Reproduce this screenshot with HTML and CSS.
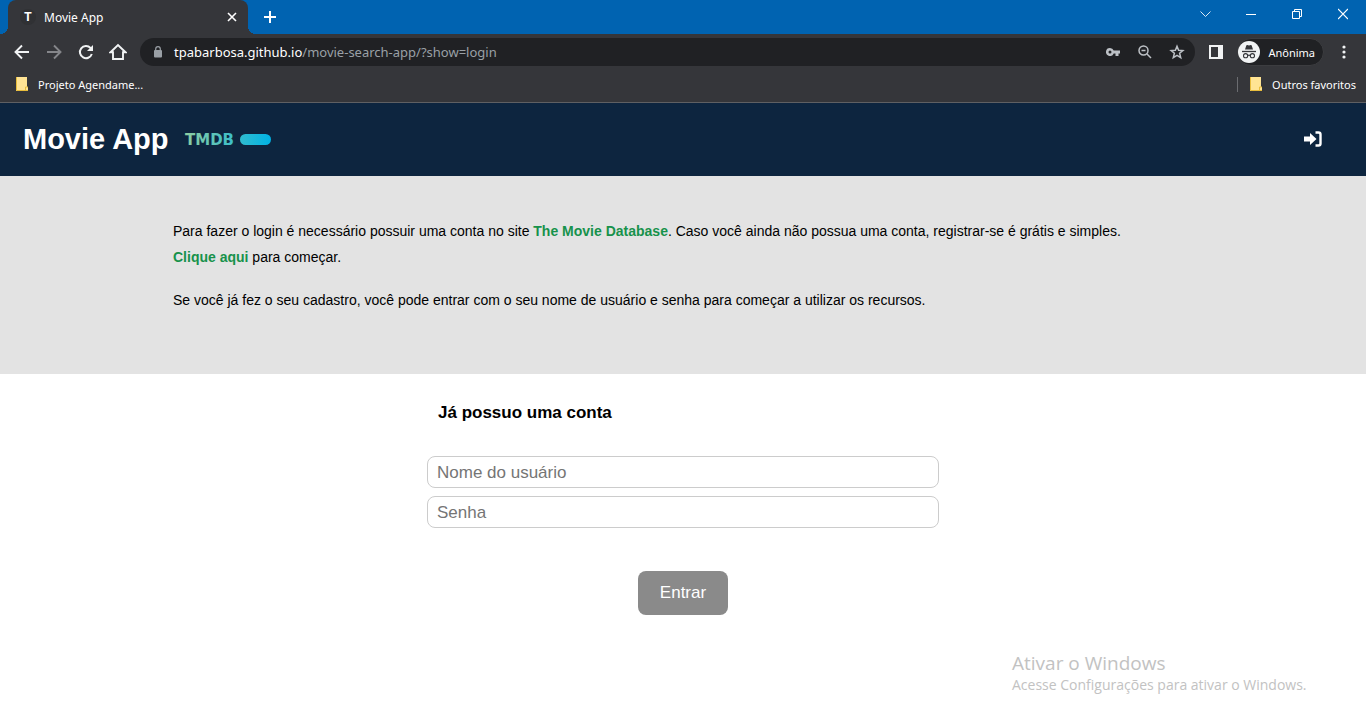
FILE: index.html
```html
<!DOCTYPE html>
<html lang="pt-BR">
<head>
<meta charset="utf-8">
<meta name="viewport" content="width=device-width, initial-scale=1">
<title>Movie App</title>
<link rel="stylesheet" href="styles.css">
</head>
<body>
<div class="browser">
  <div class="tabstrip">
    <div class="tab">
      <span class="favicon">T</span>
      <span class="tab-title">Movie App</span>
      <button class="icon-btn tab-close" aria-label="Fechar guia"><svg width="10" height="10" viewBox="0 0 10 10"><path d="M1 1l8 8M9 1l-8 8" stroke="#fff" stroke-width="1.6"/></svg></button>
    </div>
    <button class="icon-btn new-tab" aria-label="Nova guia"><svg width="12" height="12" viewBox="0 0 12 12"><path d="M6 0v12M0 6h12" stroke="#fff" stroke-width="2"/></svg></button>
    <div class="window-buttons">
      <button class="icon-btn win-btn" aria-label="Pesquisar guias"><svg width="11" height="12" viewBox="0 0 11 12"><path d="M.5 3.5l5 5 5-5" stroke="#dbe8f5" fill="none"/></svg></button>
      <button class="icon-btn win-btn" aria-label="Minimizar"><svg width="10" height="12" viewBox="0 0 10 12"><path d="M0 6.500h10" stroke="#fff"/></svg></button>
      <button class="icon-btn win-btn" aria-label="Restaurar"><svg width="10" height="12" viewBox="0 0 10 12"><path d="M.5 3.500h7v7h-7zM2.500 3.500v-2h7v7h-2" stroke="#fff" fill="none"/></svg></button>
      <button class="icon-btn win-btn" aria-label="Fechar"><svg width="10" height="12" viewBox="0 0 10 12"><path d="M0 1l10 10M10 1L0 11" stroke="#fff" stroke-width="1.2"/></svg></button>
    </div>
  </div>

  <div class="toolbar">
    <button class="icon-btn nav-btn" aria-label="Voltar"><svg width="16" height="16" viewBox="0 0 16 16"><path d="M15 8H2M8 1.500L1.500 8 8 14.500" stroke="#f1f3f4" stroke-width="1.900" fill="none"/></svg></button>
    <button class="icon-btn nav-btn" aria-label="Avançar"><svg width="16" height="16" viewBox="0 0 16 16"><path d="M1 8h13M8 1.500L14.500 8 8 14.500" stroke="#85868a" stroke-width="1.900" fill="none"/></svg></button>
    <button class="icon-btn nav-btn" aria-label="Recarregar"><svg width="16" height="16" viewBox="0 0 16 16"><path d="M13.800 10A6.100 6.100 0 1 1 12.500 3.900L14 5.400" stroke="#f1f3f4" stroke-width="2" fill="none"/><path d="M15 1v6H9z" fill="#f1f3f4"/></svg></button>
    <button class="icon-btn nav-btn" aria-label="Página inicial"><svg width="18" height="18" viewBox="0 0 18 18"><path d="M1.500 9.200L9 2l7.500 7.200H14V16H4V9.200z" stroke="#f1f3f4" stroke-width="1.900" fill="none"/></svg></button>
    <div class="omnibox">
      <svg width="8" height="12" viewBox="0 0 8 12"><rect y="4" width="8" height="7.500" rx="1" fill="#9aa0a6"/><path d="M1.700 5V3a2.300 2.300 0 0 1 4.600 0v2" stroke="#9aa0a6" stroke-width="1.200" fill="none"/></svg>
      <span class="url"><span class="host">tpabarbosa.github.io</span>/movie-search-app/?show=login</span>
      <button class="icon-btn omni-btn" aria-label="Senhas"><svg width="14" height="8" viewBox="0 0 14 8"><path fill-rule="evenodd" d="M4 0A4 4 0 0 1 7.700 2.600H14V5.400H12.500V8H9.500V5.400H7.700A4 4 0 1 1 4 0zM4 2.500a1.500 1.500 0 1 0 0 3 1.500 1.500 0 0 0 0-3z" fill="#bdc1c6"/></svg></button>
      <button class="icon-btn omni-btn" aria-label="Zoom"><svg width="14" height="14" viewBox="0 0 14 14"><circle cx="5.500" cy="5.500" r="4.500" stroke="#bdc1c6" stroke-width="1.500" fill="none"/><path d="M3.500 5.500h4M9 9l4 4" stroke="#bdc1c6" stroke-width="1.500"/></svg></button>
      <button class="icon-btn omni-btn" aria-label="Adicionar aos favoritos"><svg width="16" height="16" viewBox="0 0 16 16"><path d="M8 2.200l1.600 4 4.300.300-3.300 2.800 1.100 4.300L8 11.300l-3.700 2.300 1.100-4.300L2.100 6.500l4.300-.300z" stroke="#bdc1c6" stroke-width="1.500" fill="none"/></svg></button>
    </div>
    <button class="icon-btn side-panel" aria-label="Painel lateral"><svg width="14" height="14" viewBox="0 0 14 14"><path fill-rule="evenodd" d="M0 0h14v14H0zM2 2v10h7V2z" fill="#f1f3f4"/></svg></button>
    <button class="profile">
      <svg width="22" height="22" viewBox="0 0 22 22"><circle cx="11" cy="11" r="11" fill="#f1f3f4"/><path d="M7 8.500l1.300-4q.300-.600 1-.400l1.700.400 1.700-.400q.700-.200 1 .400l1.300 4z" fill="#35363a"/><path d="M4 10.500h14" stroke="#35363a" stroke-width="1.300"/><g fill="none" stroke="#35363a" stroke-width="1.100"><circle cx="7.600" cy="14.700" r="2.100"/><circle cx="14.400" cy="14.700" r="2.100"/><path d="M9.700 14.500q1.300-.800 2.600 0"/></g></svg>
      <span>Anônima</span>
    </button>
    <button class="icon-btn menu-btn" aria-label="Menu"><svg width="4" height="14" viewBox="0 0 4 14"><g fill="#f1f3f4"><circle cx="2" cy="2" r="1.600"/><circle cx="2" cy="7" r="1.600"/><circle cx="2" cy="12" r="1.600"/></g></svg></button>
  </div>

  <div class="bookmarks">
    <a class="bookmark" href="#"><svg width="12" height="14" viewBox="0 0 12 14"><path d="M0 0h11v10h1v4H0z" fill="#ffe494"/><path d="M.5 0v13.500H12M9.500 13v-3H12" stroke="#e8bd3c" fill="none"/></svg>Projeto Agendame...</a>
    <a class="bookmark others" href="#"><svg width="12" height="14" viewBox="0 0 12 14"><path d="M0 0h11v10h1v4H0z" fill="#ffe494"/><path d="M.5 0v13.500H12M9.500 13v-3H12" stroke="#e8bd3c" fill="none"/></svg>Outros favoritos</a>
  </div>
</div>

<header class="site-header">
  <h1 class="brand">Movie App</h1>
  <a class="tmdb" href="#">
    <svg width="88" height="24" viewBox="0 0 88 24" role="img" aria-label="TMDB">
      <defs><linearGradient id="tmdb-fill" gradientUnits="userSpaceOnUse" x1="0" y1="0" x2="87" y2="0"><stop offset="0" stop-color="#90cea1"/><stop offset=".56" stop-color="#3cbec9"/><stop offset="1" stop-color="#00b3e5"/></linearGradient></defs>
      <text class="tmdb-text" x="1" y="18" fill="url(#tmdb-fill)">TMDB</text>
      <rect x="56" y="7" width="31" height="11" rx="5.500" fill="url(#tmdb-fill)"/>
    </svg>
  </a>
  <button class="icon-btn sign-in" aria-label="Entrar na conta"><svg width="18" height="16" viewBox="0 0 18 16"><path d="M0 5.500h6V2l6.500 6L6 14v-3.500H0z" fill="#fff"/><path d="M11.500 1.500h3q2 0 2 2v9q0 2-2 2h-3" stroke="#fff" stroke-width="2.400" fill="none"/></svg></button>
</header>

<section class="intro">
  <div class="intro-text">
    <p>Para fazer o login é necessário possuir uma conta no site <a href="#">The Movie Database</a>. Caso você ainda não possua uma conta, registrar-se é grátis e simples. <a href="#">Clique aqui</a> para começar.</p>
    <p>Se você já fez o seu cadastro, você pode entrar com o seu nome de usuário e senha para começar a utilizar os recursos.</p>
  </div>
</section>

<main class="login">
  <form class="login-form">
    <h2>Já possuo uma conta</h2>
    <input type="text" placeholder="Nome do usuário" aria-label="Nome do usuário">
    <input type="password" placeholder="Senha" aria-label="Senha">
    <button class="submit" type="button">Entrar</button>
  </form>
</main>

<aside class="activation">
  <p class="activation-title">Ativar o Windows</p>
  <p>Acesse Configurações para ativar o Windows.</p>
</aside>
</body>
</html>
```
FILE: styles.css
```css
* {
  box-sizing: border-box;
}

body {
  margin: 0;
  background: #fff;
  color: #000;
  font-family: "Liberation Sans", Arial, sans-serif;
}

h1, h2, p {
  margin: 0;
}

svg {
  display: block;
  flex: none;
}

.icon-btn {
  display: flex;
  align-items: center;
  justify-content: center;
  padding: 0;
  border: 0;
  background: none;
}

/* Browser window */
.browser {
  background: #35363a;
  border-bottom: 1px solid #5f6063;
  color: #fff;
  font-family: "Noto Sans", "Open Sans", sans-serif;
  font-size: 12px;
}

.tabstrip {
  display: flex;
  height: 34px;
  padding-left: 8px;
  background: #0063b1;
}

.tab {
  position: relative;
  display: flex;
  align-items: center;
  gap: 8px;
  width: 240px;
  padding: 0 11px 0 12px;
  border-radius: 8px 8px 0 0;
  background: #35363a;
}

.tab::before,
.tab::after {
  content: "";
  position: absolute;
  bottom: 0;
  width: 8px;
  height: 8px;
}

.tab::before {
  left: -8px;
  background: radial-gradient(circle at 0 0, #0063b1 8px, #35363a 8px);
}

.tab::after {
  right: -8px;
  background: radial-gradient(circle at 100% 0, #0063b1 8px, #35363a 8px);
}

.favicon {
  width: 16px;
  border-radius: 8px;
  background: #303134;
  font-family: "Liberation Sans", Arial, sans-serif;
  font-weight: bold;
  line-height: 16px;
  text-align: center;
}

.tab-title {
  flex: 1;
}

.new-tab {
  width: 44px;
}

.window-buttons {
  display: flex;
  height: 28px;
  margin-left: auto;
}

.win-btn {
  width: 46px;
}

.toolbar {
  display: flex;
  align-items: center;
  height: 36px;
  padding: 0 2px 0 6px;
}

.nav-btn {
  width: 32px;
  height: 32px;
}

.omnibox {
  display: flex;
  flex: 1;
  align-items: center;
  height: 28px;
  margin-left: 6px;
  padding: 0 2px 0 14px;
  border-radius: 14px;
  background: #202124;
}

.url {
  flex: 1;
  margin-left: 12px;
  color: #9aa0a6;
  font-size: 13px;
}

.host {
  color: #fff;
}

.omni-btn {
  width: 32px;
  height: 28px;
}

.side-panel {
  width: 42px;
  height: 28px;
}

.profile {
  display: flex;
  align-items: center;
  gap: 8px;
  height: 28px;
  padding: 0 8px 0 0;
  border: 1px solid #3c3d40;
  border-radius: 14px;
  background: #202124;
  color: #fff;
  font-family: inherit;
  font-size: 11px;
}

.menu-btn {
  width: 40px;
  height: 28px;
}

.bookmarks {
  display: flex;
  align-items: center;
  justify-content: space-between;
  height: 32px;
  padding: 0 10px 4px 16px;
  font-size: 11px;
}

.bookmark {
  display: flex;
  align-items: center;
  gap: 10px;
  color: #fff;
  text-decoration: none;
}

.others {
  padding-left: 12px;
  border-left: 1px solid #6b6c70;
}

/* Site */
.site-header {
  display: flex;
  align-items: center;
  height: 73px;
  padding: 0 44px 2px 23px;
  background: #0d253f;
  color: #fff;
}

.brand {
  font-size: 29px;
  line-height: 34px;
}

.tmdb {
  margin-left: 15px;
}

.tmdb-text {
  font-family: "DejaVu Sans", sans-serif;
  font-size: 15px;
  font-weight: 700;
}

.sign-in {
  margin-left: auto;
}

.intro {
  padding: 42px 24px 61px;
  background: #e3e3e3;
}

.intro-text {
  max-width: 1020px;
  margin: 0 auto;
  font-size: 14px;
  line-height: 26px;
}

.intro-text p + p {
  margin-top: 17px;
}

.intro-text a {
  color: #17924b;
  font-weight: bold;
  text-decoration: none;
  white-space: nowrap;
}

.login {
  padding: 29px 24px 36px;
}

.login-form {
  display: flex;
  flex-direction: column;
  max-width: 512px;
  margin: 0 auto;
}

.login-form h2 {
  margin: 0 0 33px 11px;
  font-size: 17px;
  line-height: 20px;
}

.login-form input {
  height: 32px;
  margin-bottom: 8px;
  padding: 1px 9px 0;
  border: 1px solid #ccc;
  border-radius: 8px;
  background: #fff;
  font-family: inherit;
  font-size: 17px;
}

.login-form input::placeholder {
  color: #757575;
}

.submit {
  align-self: center;
  margin-top: 35px;
  padding: 12px 22px;
  border: 0;
  border-radius: 8px;
  background: #8a8a8a;
  color: #fff;
  font-family: inherit;
  font-size: 17px;
  line-height: 20px;
}

/* System notice */
.activation {
  width: 310px;
  margin: 0 44px 0 auto;
  color: #c2c2c2;
  font-family: "Open Sans", "Noto Sans", sans-serif;
  font-size: 14px;
  line-height: 20px;
  white-space: nowrap;
}

.activation-title {
  font-size: 19px;
  line-height: 24px;
}
```
